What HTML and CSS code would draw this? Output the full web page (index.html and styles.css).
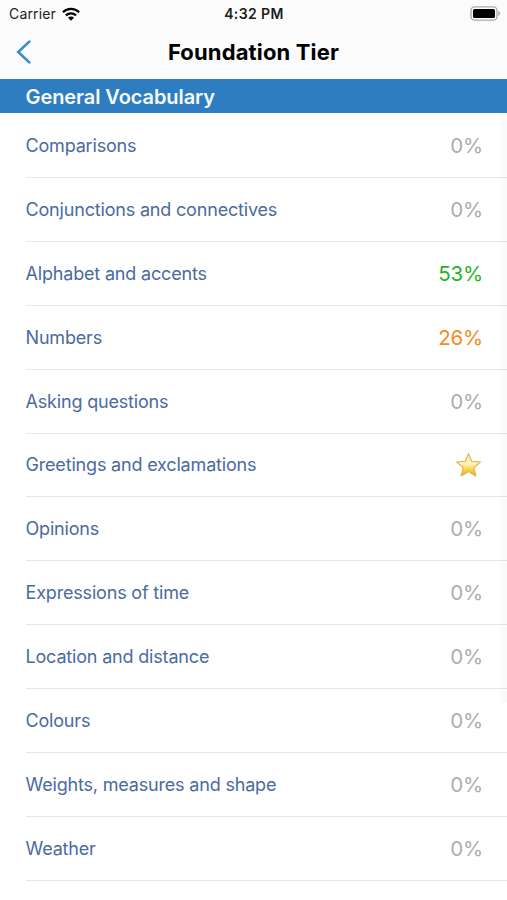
FILE: index.html
```html
<!DOCTYPE html>
<html lang="en">
<head>
<meta charset="utf-8">
<title>Foundation Tier</title>
<link rel="stylesheet" href="styles.css">
</head>
<body>
<header class="top">
  <div class="status">
    <div class="carrier"><span>Carrier</span>
      <svg class="wifi" width="18" height="14" viewBox="0 0 18 14"><g fill="none" stroke="#000" stroke-width="2.3"><path d="M.9 5.2C5.5.7 12.5.7 17.1 5.2"/><path d="M3.9 8.4c2.9-2.8 7.3-2.8 10.2 0"/></g><path d="M9 13.7 6 10.7c1.6-1.6 4.4-1.6 6 0z"/></svg>
    </div>
    <div class="clock">4:32 PM</div>
    <svg class="battery" width="31" height="15" viewBox="0 0 31 15"><rect x="1" y=".9" width="26" height="13.2" rx="3.6" fill="#fff" stroke="#aaa" stroke-width="1.4"/><rect x="3" y="3" width="22" height="9" rx="1.5"/><path d="M28.3 5c2.3.8 2.3 4.2 0 5z" fill="#aaa"/></svg>
  </div>
  <nav class="nav">
    <svg class="back" width="16" height="26" viewBox="0 0 16 26"><path d="M13.3 2.6 2.2 13l11.1 10.4" fill="none" stroke="#368bc8" stroke-width="2.6" stroke-linecap="round" stroke-linejoin="miter"/></svg>
    <h1 class="title">Foundation Tier</h1>
  </nav>
</header>
<main class="content">
  <h2 class="section">General Vocabulary</h2>
  <ul class="list">
    <li class="row"><span class="name">Comparisons</span><span class="score">0%</span></li>
    <li class="row"><span class="name">Conjunctions and connectives</span><span class="score">0%</span></li>
    <li class="row"><span class="name">Alphabet and accents</span><span class="score good">53%</span></li>
    <li class="row"><span class="name">Numbers</span><span class="score fair">26%</span></li>
    <li class="row"><span class="name">Asking questions</span><span class="score">0%</span></li>
    <li class="row"><span class="name">Greetings and exclamations</span>
      <svg class="star" width="27" height="26" viewBox="0 0 27 26"><defs><linearGradient id="gold" x1="0" y1="0" x2="0" y2="1"><stop offset="0" stop-color="#fff0ad"/><stop offset=".45" stop-color="#fff3b8"/><stop offset=".72" stop-color="#fbd146"/><stop offset="1" stop-color="#eda812"/></linearGradient></defs><path d="M13.5 1.6 16.7 9.3 25.4 10 18.8 15.6 20.9 24 13.5 19.5 6.1 24 8.2 15.6 1.6 10 10.3 9.3Z" fill="url(#gold)" stroke="#dfb14b" stroke-width="1.1" stroke-linejoin="round"/></svg></li>
    <li class="row"><span class="name">Opinions</span><span class="score">0%</span></li>
    <li class="row"><span class="name">Expressions of time</span><span class="score">0%</span></li>
    <li class="row"><span class="name">Location and distance</span><span class="score">0%</span></li>
    <li class="row"><span class="name">Colours</span><span class="score">0%</span></li>
    <li class="row"><span class="name">Weights, measures and shape</span><span class="score">0%</span></li>
    <li class="row"><span class="name">Weather</span><span class="score">0%</span></li>
  </ul>
  <div class="scrollbar"></div>
</main>
</body>
</html>
```
FILE: styles.css
```css
* { box-sizing: border-box; }
body { margin: 0; height: 900px; overflow: hidden; background: #fff; font-family: Inter, "Liberation Sans", sans-serif; }
.top { height: 79px; background: #fbfbfb; color: #000; }
.status { height: 27px; display: grid; grid-template-columns: 1fr auto 1fr; align-items: center; padding: 0 6px 0 9px; font-size: 14px; }
.carrier { display: flex; align-items: center; gap: 6px; color: #222; letter-spacing: .15px; }
.wifi { display: block; }
.clock { font-weight: 600; color: #1c1c1c; letter-spacing: .4px; margin-left: -2px; }
.battery { justify-self: end; }
.nav { height: 50px; display: grid; grid-template-columns: 1fr auto 1fr; align-items: center; padding: 0 16px; }
.title { margin: 0; font-size: 22px; line-height: 26px; font-weight: 700; letter-spacing: .15px; }
.content { position: relative; }
.section { margin: 0; height: 34px; line-height: 36px; padding-left: 25.5px; background: #2f7dc1; color: #f4faff; font-size: 20px; font-weight: 600; letter-spacing: -.07px; }
.list { margin: 0; padding: 1px 0 0 26px; list-style: none; }
.row { height: 63.92px; display: flex; align-items: center; justify-content: space-between; padding-right: 24px; border-bottom: 1px solid #e7e7e7; }
.name { color: #4a6b9f; font-size: 18px; letter-spacing: -.18px; margin-left: -.5px; }
.score { color: #adadad; font-size: 20.5px; letter-spacing: -.2px; }
.star { margin-right: 1px; }
.good { color: #1eb426; }
.fair { color: #f58a20; }
.scrollbar { position: absolute; right: 0; top: 34px; width: 7px; height: 590px; background: rgba(0,0,0,.02); }
```
